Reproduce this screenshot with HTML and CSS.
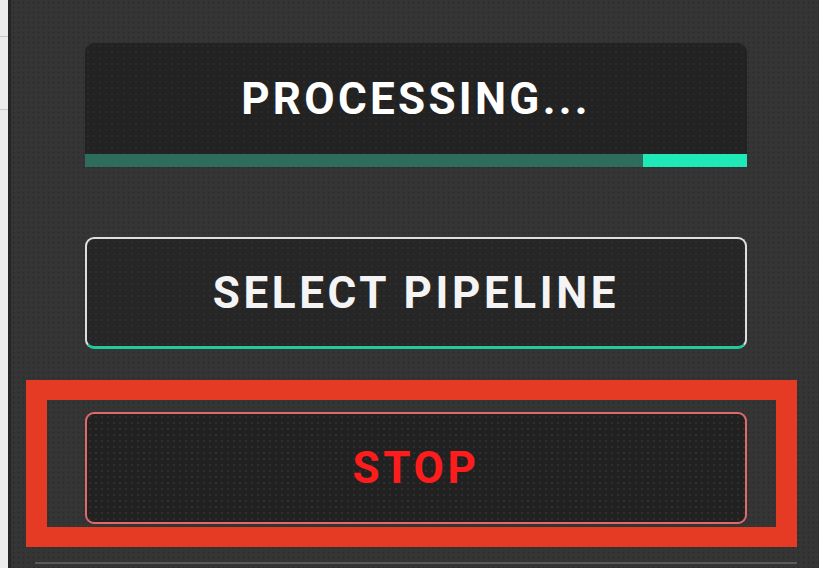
FILE: index.html
```html
<!DOCTYPE html>
<html>
<head>
<meta charset="utf-8">
<link rel="stylesheet" href="styles.css">
</head>
<body>
<div class="app">
  <div class="side">
    <div class="side-row first"></div>
    <div class="side-row second"></div>
  </div>
  <div class="divider"></div>
  <div class="panel">
    <div class="status">
      <div class="status-box">PROCESSING...</div>
      <div class="progress">
        <div class="progress-fill"></div>
      </div>
    </div>
    <button class="btn btn-select">SELECT PIPELINE</button>
    <button class="btn btn-stop">STOP</button>
    <div class="rule"></div>
    <div class="highlight"></div>
  </div>
</div>
</body>
</html>
```
FILE: styles.css
```css
* { box-sizing: border-box; }
html, body {
  margin: 0;
  padding: 0;
  width: 819px;
  height: 568px;
  overflow: hidden;
  background: #353535;
  font-family: Roboto, "Liberation Sans", sans-serif;
}
.app {
  display: flex;
  height: 568px;
}
.side {
  width: 8px;
  background: #ececec;
  display: flex;
  flex-direction: column;
}
.side-row.first {
  height: 37px;
  border-bottom: 1px solid #c8c8c8;
}
.side-row.second {
  height: 73px;
  border-bottom: 1px solid #c8c8c8;
}
.divider {
  width: 3px;
  background: #262626;
}
.panel {
  position: relative;
  flex: 1;
  padding: 43px 72px 0 74px;
  display: flex;
  flex-direction: column;
  background-color: #353535;
  background-image: radial-gradient(circle, #2c2c2c 0.9px, transparent 1.1px);
  background-size: 5px 5px;
}
.status {
  display: flex;
  flex-direction: column;
}
.status-box {
  height: 111px;
  background-color: #222222;
  background-image: radial-gradient(circle, #2a2a2a 0.9px, transparent 1.1px);
  background-size: 6px 6px;
  border-radius: 9px 9px 0 0;
  color: #ffffff;
  font-weight: 700;
  font-size: 44px;
  letter-spacing: 3.3px;
  display: flex;
  align-items: center;
  justify-content: center;
}
.progress {
  height: 13px;
  background: #2e6c5b;
  display: flex;
  justify-content: flex-end;
}
.progress-fill {
  width: 104px;
  background: #1fe9b6;
}
.btn {
  height: 112px;
  border-radius: 9px;
  font-family: Roboto, "Liberation Sans", sans-serif;
  font-weight: 700;
  font-size: 44px;
  letter-spacing: 3.6px;
  display: flex;
  align-items: center;
  justify-content: center;
  padding: 0;
  background-color: #262626;
  background-image: radial-gradient(circle, #2e2e2e 0.9px, transparent 1.1px);
  background-size: 6px 6px;
}
.btn-select {
  margin-top: 70px;
  color: #f4f4f4;
  border: 2px solid #dedede;
  border-bottom: 3px solid #22c99c;
}
.btn-stop {
  margin-top: 63px;
  color: #ff1c1c;
  background-color: #212121;
  border: 2px solid #e06a6a;
}
.rule {
  margin-top: 38px;
  margin-left: -50px;
  margin-right: -50px;
  height: 2px;
  background: #5a5a5a;
}
.highlight {
  position: absolute;
  left: 15px;
  top: 380px;
  width: 771px;
  height: 167px;
  border: solid #e53a23;
  border-width: 20px 21px 20px 21px;
  pointer-events: none;
}
```
